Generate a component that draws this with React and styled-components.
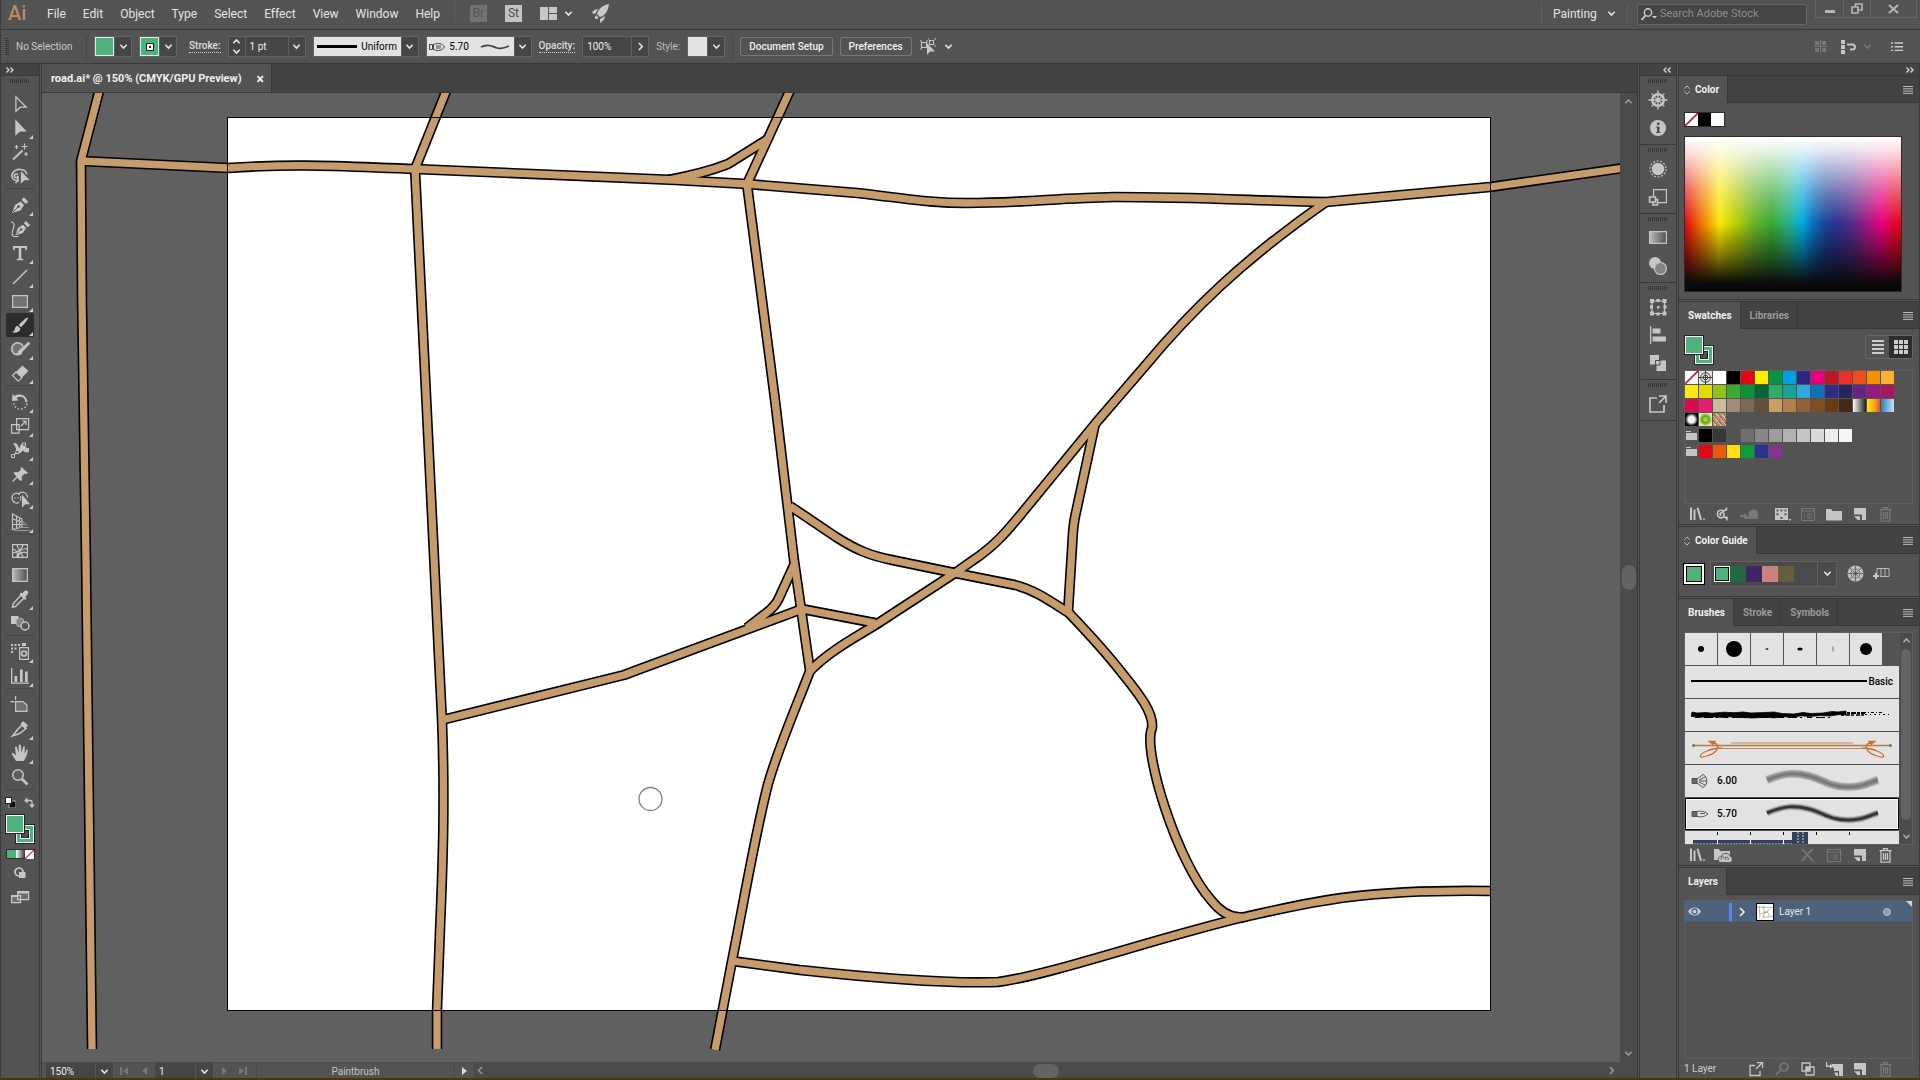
import React, { useState } from "react";
import styled, { createGlobalStyle } from "styled-components";

const GREEN = "#4fb17c";
const ICON = "#c6c6c6";
const DIM = "#777777";

const GlobalStyle = createGlobalStyle`
  * {
    box-sizing: border-box;
  }

  body {
    margin: 0;
    background: #535353;
    color: #dedede;
    font-family: Roboto, "Liberation Sans", sans-serif;
    font-size: 10px;
    line-height: 14px;
    overflow: hidden;
  }

  button, input, select {
    font: inherit;
    color: inherit;
    border: 0;
    padding: 0;
    margin: 0;
    background: none;
    border-radius: 0;
    outline: none;
  }

  svg {
    display: block;
    flex: none;
  }
`;

const Page = styled.div`
  height: 100vh;
  display: flex;
  flex-direction: column;
  border-left: 1px solid #3b3b3b;
  border-bottom: 2px solid #47350f;
`;

const MenuBar = styled.header`
  display: flex;
  align-items: center;
  height: 30px;
  padding: 0 3px 7px 7px;
  border-bottom: 1px solid #383838;
`;

const Logo = styled.span`
  width: 30px;
  padding-top: 4px;
  font-size: 20px;
  line-height: 20px;
  font-weight: 500;
  color: #bd8a66;
`;

const Menus = styled.nav`
  display: flex;
  padding-top: 6px;
`;

const MenuItem = styled.button`
  padding: 0 8px 0 9px;
  font-size: 12px;
  line-height: 16px;
  color: #e6e6e6;
`;

const MenuTools = styled.div`
  display: flex;
  align-items: center;
  gap: 18px;
  margin-left: 6px;
  padding: 5px 0 0 15px;
  border-left: 1px solid #5f5f5f;
`;

const AppBadge = styled.button`
  width: 17px;
  height: 17px;
  font-size: 12px;
  line-height: 17px;
  color: ${(p) => (p.$dim ? "#565656" : "#4b4b4b")};
  background: ${(p) => (p.$dim ? "#727272" : "#c4c4c4")};
`;

const IconButton = styled.button`
  display: flex;
  align-items: center;
  justify-content: center;
  gap: 7px;
`;

const Spacer = styled.div`
  flex: 1;
`;

const Workspace = styled.label`
  display: flex;
  align-items: center;
  height: 20px;
  margin-top: 5px;
  padding: 0 11px;
  border: solid #606060;
  border-width: 0 1px;
`;

const WorkspaceSelect = styled.select`
  appearance: none;
  width: 54px;
  font-size: 12px;
  line-height: 16px;
  color: #e6e6e6;
`;

const Search = styled.label`
  display: flex;
  align-items: center;
  gap: 2px;
  width: 170px;
  height: 21px;
  margin: 6px 8px 0 9px;
  padding-left: 3px;
  border: 1px solid #666;
  border-radius: 2px;
  background: #454545;
`;

const SearchInput = styled.input`
  width: 130px;
  font-size: 11px;

  &::placeholder {
    color: #8d8d8d;
    opacity: 1;
  }
`;

const WindowButtons = styled.div`
  display: flex;
  align-self: flex-start;
  height: 18px;
  border: 1px solid #656565;
  border-top: 0;
`;

const WindowButton = styled(IconButton)`
  width: ${(p) => p.$width || 27}px;

  & + & {
    border-left: 1px solid #656565;
  }
`;

const ControlBar = styled.section`
  display: flex;
  align-items: center;
  gap: 7px;
  height: 34px;
  padding: 0 16px 0 4px;
  border-bottom: 1px solid #383838;
`;

const Grip = styled.div`
  flex: none;
  width: ${(p) => (p.$vertical ? 4 : 20)}px;
  height: ${(p) => (p.$vertical ? 18 : 4)}px;
  background: repeating-linear-gradient(
    ${(p) => (p.$vertical ? "180deg" : "90deg")},
    #363636 0 1px,
    transparent 1px 2px
  );
`;

const Selection = styled.span`
  width: 63px;
  color: #c8c8c8;
`;

const Divider = styled.div`
  width: 1px;
  height: 24px;
  background: #464646;
`;

const Field = styled.div`
  display: flex;
  align-items: stretch;
  height: 21px;
  border: 1px solid #646464;
  background: #454545;
`;

const FieldInput = styled.input`
  width: ${(p) => p.$width}px;
  padding-left: 4px;
  color: #f0f0f0;
`;

const FieldButton = styled(IconButton)`
  width: ${(p) => p.$width || 17}px;
  border-left: 1px solid #5d5d5d;
`;

const Spinner = styled.div`
  display: flex;
  flex-direction: column;
  justify-content: space-evenly;
  width: 17px;
  border-right: 1px solid #5d5d5d;
`;

const Well = styled.button`
  display: flex;
  align-items: center;
  justify-content: center;
  gap: 4px;
  width: ${(p) => p.$width || 19}px;
  background: ${(p) => p.$color || "#e3e3e3"};
  border: ${(p) => (p.$color ? "1px solid #dceee4" : "0")};
  color: #000;
`;

const StrokeDot = styled.span`
  width: 6px;
  height: 6px;
  border: 2px solid #fff;
  outline: 1px solid #222;
  background: #222;
`;

const DottedLabel = styled.button`
  margin-left: ${(p) => p.$indent || 0}px;
  line-height: 12px;
  font-weight: 500;
  border-bottom: 1px dotted #d0d0d0;
`;

const PlainLabel = styled.span`
  color: #bdbdbd;
`;

const TextButton = styled.button`
  height: 19px;
  padding: 0 8px;
  font-weight: 500;
  color: #f2f2f2;
  border: 1px solid #777;
  border-radius: 2px;
`;

const Tail = styled.div`
  display: flex;
  align-items: center;
  gap: 14px;
  margin-left: auto;
`;

const Main = styled.main`
  flex: 1;
  min-height: 0;
  display: flex;
`;

const ToolColumn = styled.aside`
  display: flex;
  flex-direction: column;
  width: 41px;
  border-right: 3px double #3b3b3b;
`;

const Strip = styled.div`
  display: flex;
  justify-content: ${(p) => (p.$end ? "flex-end" : "flex-start")};
  align-items: center;
  height: 12px;
  padding: 0 5px;
  background: #424242;
  border-bottom: 1px solid #383838;
`;

const ToolGrip = styled.div`
  display: flex;
  justify-content: center;
  height: 16px;
  padding-top: 3px;
`;

const ToolGroup = styled.div`
  display: flex;
  flex-direction: column;
  margin: 0 4px 4px;
  border-bottom: 1px solid #484848;
`;

const Tool = styled.button`
  position: relative;
  display: flex;
  align-items: center;
  justify-content: center;
  align-self: center;
  width: 28px;
  height: 24px;
  border-radius: 2px;
  background: ${(p) => (p.$active ? "#2c2c2c" : "transparent")};

  &::after {
    content: "";
    display: ${(p) => (p.$more ? "block" : "none")};
    position: absolute;
    right: 1px;
    bottom: 1px;
    border: 2px solid transparent;
    border-right-color: #d0d0d0;
    border-bottom-color: #d0d0d0;
  }
`;

const ToolFooter = styled.div`
  display: flex;
  flex-direction: column;
  align-items: center;
  padding-top: 3px;
`;

const DefaultRow = styled.div`
  display: flex;
  justify-content: space-between;
  width: 30px;
  margin-bottom: 6px;
`;

const ModeRow = styled.div`
  display: flex;
  margin: 5px 0 2px;
  border: 1px solid #2e2e2e;
`;

const Mode = styled.button`
  width: 9px;
  height: 8px;
  background: ${(p) => p.$fill};
`;

const Document = styled.section`
  flex: 1;
  min-width: 0;
  display: flex;
  flex-direction: column;
`;

const TabBar = styled.div`
  display: flex;
  height: 29px;
  background: #424242;
  border-bottom: 1px solid #383838;
`;

const DocTab = styled.div`
  display: flex;
  align-items: center;
  gap: 15px;
  padding: 2px 7px 0 9px;
  background: #535353;
  border-right: 1px solid #383838;
  font-size: 11px;
  font-weight: 700;
  color: #f0f0f0;
`;

const CloseTab = styled.button`
  font-size: 14px;
  font-weight: 700;
`;

const Work = styled.div`
  flex: 1;
  min-height: 0;
  display: flex;
`;

const Canvas = styled.div`
  flex: 1;
  min-width: 0;
  overflow: hidden;
  background: #606060;
`;

const ScrollY = styled.div`
  display: flex;
  flex-direction: column;
  align-items: center;
  justify-content: space-between;
  width: 17px;
  padding: 4px 0;
  background: #4a4a4a;
`;

const Thumb = styled.div`
  width: ${(p) => p.$width}px;
  height: ${(p) => p.$height}px;
  border-radius: 8px;
  background: #636363;
`;

const StatusBar = styled.footer`
  display: flex;
  align-items: stretch;
  height: 16px;
  padding-left: 4px;
  border-top: 1px solid #4b4b4b;
`;

const StatusInput = styled.input`
  width: ${(p) => p.$width}px;
  padding: 2px 0 0 4px;
  color: #f0f0f0;
  background: #454545;
`;

const StatusButton = styled(IconButton)`
  width: ${(p) => p.$width || 18}px;
  padding-top: 1px;
  background: ${(p) => (p.$dark ? "#454545" : "transparent")};
  border-left: 1px solid #565656;
`;

const StatusText = styled.div`
  width: 199px;
  margin-left: 5px;
  padding-top: 2px;
  text-align: center;
  color: #c4c4c4;
  border: solid #484848;
  border-width: 0 1px;
`;

const ScrollX = styled.div`
  flex: 1;
  display: flex;
  align-items: center;
  justify-content: space-between;
  padding: 0 21px 0 2px;
  margin-left: 1px;
  background: #4a4a4a;
`;

const Dock = styled.aside`
  display: flex;
  flex-direction: column;
  width: 42px;
  border-left: 3px double #383838;
  border-right: 3px double #383838;
`;

const DockGroup = styled.div`
  display: flex;
  flex-direction: column;
  align-items: center;
  padding: 3px 0 2px;
  border-bottom: 1px solid #383838;
`;

const DockButton = styled(IconButton)`
  width: 28px;
  height: 28px;

  ${Grip} + & {
    margin-top: 3px;
  }
`;

const Panels = styled.aside`
  display: flex;
  flex-direction: column;
  width: 241px;
  border-right: 1px solid #3b3b3b;
`;

const Panel = styled.section`
  display: flex;
  flex-direction: column;
  flex: ${(p) => (p.$grow ? 1 : "none")};

  & + & {
    border-top: 3px double #383838;
  }
`;

const PanelHeader = styled.div`
  display: flex;
  align-items: stretch;
  height: 27px;
  background: #424242;
  box-shadow: inset 0 -1px #383838;
`;

const PanelTab = styled.button`
  display: flex;
  align-items: center;
  gap: 5px;
  padding: 0 8px 0 ${(p) => (p.$closed ? 5 : 9)}px;
  font-weight: 700;
  color: ${(p) => (p.$active ? "#f2f2f2" : "#999")};
  background: ${(p) => (p.$active ? "#535353" : "transparent")};
  border-right: 1px solid #383838;
`;

const PanelMenu = styled(IconButton)`
  margin: 0 6px 0 auto;
`;

const ColorBody = styled.div`
  padding: 9px 17px 7px 5px;
`;

const Quick = styled.div`
  display: flex;
  width: 41px;
  border: 1px solid #2b2b2b;
`;

const Chip = styled.button`
  width: ${(p) => p.$size || 13}px;
  height: ${(p) => p.$size || 13}px;
  overflow: hidden;
  margin: ${(p) => (p.$picked ? "0 1px" : 0)};
  background: ${(p) => p.$fill};
  border: ${(p) => (p.$picked ? "1px solid #000" : "0")};
  box-shadow: ${(p) => (p.$picked ? "0 0 0 1px #fff" : "none")};
`;

const Spectrum = styled.div`
  height: 156px;
  margin-top: 9px;
  border: 1px solid #2b2b2b;
  background: linear-gradient(
      180deg,
      #fff 0%,
      rgba(255, 255, 255, 0.85) 10%,
      rgba(255, 255, 255, 0.35) 35%,
      rgba(0, 0, 0, 0) 56%,
      rgba(0, 0, 0, 0.45) 76%,
      #0a0a0a 95%,
      #050505 100%
    ),
    linear-gradient(
      90deg,
      #e30613 0%,
      #f07a00 8%,
      #fbe90a 16%,
      #c6d300 22%,
      #6ab42a 32%,
      #36a932 40%,
      #2fb070 46%,
      #12b3b5 51%,
      #00a3e0 55%,
      #0b70c0 59%,
      #1c4399 65%,
      #2b3490 70%,
      #55298a 77%,
      #9a1a82 84%,
      #e5007d 91%,
      #e5062b 97%,
      #e30613 100%
    );
`;

const SwatchTop = styled.div`
  display: flex;
  justify-content: space-between;
  align-items: flex-start;
  padding: 6px 6px 5px 5px;
`;

const ViewToggle = styled.div`
  display: flex;
  height: 24px;
  border: 1px solid #666;
  border-radius: 2px;
`;

const ViewButton = styled(IconButton)`
  width: 23px;
  background: ${(p) => (p.$active ? "#2c2c2c" : "transparent")};
`;

const SwatchBox = styled.div`
  height: 134px;
  margin: 0 6px 0 5px;
  border: 1px solid #5f5f5f;
`;

const SwatchRow = styled.div`
  display: flex;
  gap: 1px;
  margin-bottom: ${(p) => (p.$gap ? 3 : 1)}px;
`;

const PanelTools = styled.div`
  display: flex;
  align-items: center;
  height: 20px;
  padding: 0 20px 0 5px;
`;

const PanelTool = styled(IconButton)`
  width: 26px;
  height: 18px;
  margin-left: ${(p) => (p.$push ? "auto" : "0")};
`;

const GuideBody = styled.div`
  display: flex;
  align-items: center;
  height: 42px;
  padding: 0 5px 3px;
`;

const BaseColor = styled.button`
  width: 20px;
  height: 20px;
  border: 2px solid #fff;
  outline: 1px solid #000;
  background: ${GREEN};
  box-shadow: inset 0 0 0 1px #000;
`;

const Harmony = styled.div`
  display: flex;
  align-items: center;
  width: 127px;
  height: 26px;
  margin-left: 6px;
  padding-left: 3px;
  border: 1px solid #616161;
  background: #4a4a4a;
`;

const HarmonyOpen = styled(IconButton)`
  align-self: stretch;
  width: 19px;
  margin-left: auto;
  border-left: 1px solid #616161;
`;

const GuideTools = styled.div`
  display: flex;
  gap: 9px;
  margin-left: 10px;
`;

const BrushBox = styled.div`
  display: flex;
  height: 213px;
  margin: 6px 6px 0 5px;
  border: 1px solid #5f5f5f;
  overflow: hidden;
`;

const BrushList = styled.div`
  display: flex;
  flex-direction: column;
  gap: 1px;
  width: 214px;
`;

const DotRow = styled.div`
  display: flex;
  gap: 1px;
`;

const DotBrush = styled(IconButton)`
  width: 32px;
  height: 32px;
  background: #e3e3e3;
`;

const BrushRow = styled.button`
  display: flex;
  align-items: center;
  flex: none;
  height: 32px;
  padding: 0 5px;
  color: #000;
  font-weight: 500;
  background: #e3e3e3;
  border: ${(p) => (p.$picked ? "1px solid #000" : "1px solid #e3e3e3")};
  box-shadow: inset 0 0 0 1px ${(p) => (p.$picked ? "#fff" : "#e3e3e3")};
`;

const BrushSize = styled.span`
  width: 55px;
  padding-left: 8px;
  text-align: left;
`;

const BrushScroll = styled.div`
  display: flex;
  flex-direction: column;
  align-items: center;
  gap: 4px;
  width: 12px;
  margin-left: auto;
  padding: 3px 0;
  background: #4b4b4b;
`;

const LayerBox = styled.div`
  flex: 1;
  margin: 5px 6px 0 5px;
  border: 1px solid #5f5f5f;
`;

const LayerRow = styled.div`
  position: relative;
  display: flex;
  align-items: center;
  height: 21px;
  padding-left: 3px;
  background: #4d637c;

  &::after {
    content: "";
    position: absolute;
    top: 0;
    right: 0;
    border: 3px solid transparent;
    border-top-color: #d4d4d4;
    border-right-color: #d4d4d4;
  }
`;

const LayerColor = styled.div`
  width: 3px;
  height: 18px;
  margin-left: 28px;
  background: #5b84ec;
`;

const LayerThumb = styled.div`
  margin: 0 5px 0 10px;
  border: 1px solid #000;
  background: #fff;
`;

const LayerName = styled.span`
  color: #e8e8e8;
`;

const LayerTools = styled(PanelTools)`
  height: 19px;
`;

const LayerCount = styled.span`
  margin-right: auto;
  color: #d0d0d0;
`;

const s = { fill: "none", stroke: ICON, strokeWidth: 1.2 };

function Chevron({ dir = "down", color = "#e8e8e8", size = 9 }) {
  const d = {
    down: "M1.5 3 5 6.8 8.5 3",
    up: "M1.5 7 5 3.2 8.5 7",
    right: "M3.2 1.2 7 5 3.2 8.8",
    left: "M6.8 1.2 3 5l3.8 3.8",
  }[dir];
  return (
    <svg width={size} height={size} viewBox="0 0 10 10">
      <path d={d} fill="none" stroke={color} strokeWidth="1.7" />
    </svg>
  );
}

function Doubles({ left }) {
  return (
    <svg width="8" height="6" viewBox="0 0 8 6">
      <path
        d={left ? "M3.5 .5 1 3l2.5 2.5M7.5 .5 5 3l2.5 2.5" : "M.5 .5 3 3 .5 5.5M4.5 .5 7 3 4.5 5.5"}
        fill="none"
        stroke="#d6d6d6"
        strokeWidth="1.4"
      />
    </svg>
  );
}

function Hamburger() {
  return (
    <svg width="10" height="8" viewBox="0 0 10 8">
      <path d="M0 .5h10M0 2.8h10M0 5.1h10M0 7.4h10" stroke="#bbb" strokeWidth="1" />
    </svg>
  );
}

function NoneMark({ size = 13 }) {
  return (
    <svg width={size} height={size} viewBox="0 0 13 13">
      <path fill="#fff" d="M0 0h13v13H0z" />
      <path d="M0 13 13 0" stroke="#d5141b" strokeWidth="1.6" />
    </svg>
  );
}

function FillStroke() {
  return (
    <svg width="30" height="30" viewBox="0 0 30 30">
      <path d="M10 10h20v20H10z" fill="#222" />
      <path d="M11 11h18v18H11z" fill="#fff" />
      <path d="M12 12h16v16H12z" fill={GREEN} />
      <path d="M15 15h10v10H15z" fill="#fff" />
      <path d="M16 16h8v8h-8z" fill="#222" />
      <path d="M17 17h6v6h-6z" fill="#535353" />
      <path d="M0 0h20v20H0z" fill="#222" />
      <path d="M1 1h18v18H1z" fill="#fff" />
      <path d="M2 2h16v16H2z" fill={GREEN} />
    </svg>
  );
}

const nib = (
  <>
    <path d="m2 18 3-8 5.500-3.500L14 10l-3.500 5.500z" fill={ICON} />
    <path d="m3 17 5-5" stroke="#535353" strokeWidth="1" />
    <circle cx="8.500" cy="11.500" r="1.300" fill="#535353" />
    <path d="m11.500 4.800 2.300-2.600 4.600 4.600-2.600 2.300z" fill={ICON} />
  </>
);

const toolIcons = {
  Selection: <path {...s} d="M5.900 2.800v14.400l4.400-4h5.900z" strokeWidth="1.300" />,
  "Direct Selection": <path fill={ICON} d="M5.300 1.500v16.300l4.700-4.300h6.800z" />,
  "Magic Wand": (
    <>
      <path d="m3 17.500 9.500-9" stroke={ICON} strokeWidth="2" />
      <path d="M14.500 1.500v6M11.500 4.500h6M6.500 3v4M4.500 5h4M16 10v4M14 12h4" stroke={ICON} strokeWidth="1.200" />
    </>
  ),
  Lasso: (
    <>
      <path {...s} strokeWidth="1.700" d="M9 14.500C4 15.500 1.500 12 2 9c.7-4 5-6 9-5.500 3 .3 5.500 2 5.700 5M8 8.500c-2.300-1.300-4 .2-3.500 2 .6 1.700 3.500 1.300 3.500-.8 0 3-.5 6-2.500 7.300" />
      <path fill={ICON} stroke="#535353" strokeWidth=".7" d="M10.500 4v14.500l4-4h5.700z" />
    </>
  ),
  Pen: nib,
  Curvature: (
    <>
      <g transform="translate(3.500 0) scale(.9)">{nib}</g>
      <path {...s} d="M1 3c3 0 3.500 3 2.500 6-1 3-3 8 1 8.500h4" />
    </>
  ),
  Type: <path fill={ICON} d="M3 3h14v4h-1.500L15 5h-3.700v10.500l2 .5v1.300H6.700V16l2-.5V5H5l-.5 2H3z" />,
  "Line Segment": <path d="M3 17 17 3" stroke={ICON} strokeWidth="1.400" />,
  Rectangle: <path {...s} fill="#727272" d="M2.600 4.600h14.800v11.800H2.600z" />,
  Paintbrush: (
    <path fill={ICON} d="M18 2.500c-1-1-8.500 6.300-9.300 7.500l2.300 2.300C12.500 11 19 3.500 18 2.500zM8 11c-2.700-.5-3 2-3.300 3.500-.2 1.300-1 2-2.700 2.500 3 1.500 8 .5 8.300-3.500z" />
  ),
  Shaper: (
    <>
      <path {...s} strokeWidth="1.600" fill="#727272" d="M13 7a6 6 0 1 0-1 7" />
      <path fill={ICON} stroke={ICON} strokeWidth=".6" d="M18.500 3 20 4.500 11 14l-2.500.7-.7-.7.7-2z" />
      <path {...s} d="M8.500 14.500 6 15" />
    </>
  ),
  Eraser: (
    <>
      <path fill={ICON} d="m12.500 2.500 6 5.500-6.500 6.500-6-5.500z" />
      <path {...s} d="m6 9-3.500 3.500 5.500 5.500h.5l3.500-3.500z" />
    </>
  ),
  Rotate: (
    <>
      <path fill={ICON} d="M2 9 2.500 2l2 2C9 .8 17 3 17.500 10l-2 .2C15 5 10 3.500 6.500 6L8.500 8.500z" />
      <path {...s} strokeWidth="1.500" strokeDasharray="1.500 2" d="M17 11.500c-1.500 7.500-11.500 7.500-13.500 0" />
    </>
  ),
  Scale: <path {...s} d="M6.600 2.600h12v11h-12zM1.600 8.600h7.500v8.500H1.600zM11 10l4.500-4.500M12 5h4v4" />,
  Width: (
    <>
      <path fill={ICON} d="M3 4c3-3 5 1 6.500 5 .5-4 2.500-7 4.500-4 1.500 2.500 3 3.500 5 3v4c-3 1-5.500 0-6-2-1.500 3-4 4-6 2C6 10 6 6 3 4z" />
      <path {...s} d="m3 16 4-4 7-6" />
      <path d="M1.500 14.500h3v3h-3zM6 10.500h3v3H6zM12.500 3h3v3h-3z" fill="#535353" stroke={ICON} />
    </>
  ),
  "Puppet Warp": (
    <path fill={ICON} d="m11.500 3 6.500 6-2 1-1.700-.3-2.800 3.300.5 3-1.200 1.200-3.500-3.500L3 18l-1-1 4.500-4.300L3.500 9 5 8l3 .3 3-2.800-.5-1.500z" />
  ),
  "Shape Builder": (
    <>
      <path {...s} d="M8.500 14.500C7 16 2 14.500 2 10s5-6 6.500-4c3-4 9-1 9 3.500" />
      <path {...s} strokeDasharray="1.500 1.500" d="M4 10h9M8.500 6c3 1.500 3 6 0 8.500" />
      <path fill={ICON} d="M12 6.500v13l3.300-3.300H20z" />
    </>
  ),
  "Perspective Grid": (
    <>
      <path {...s} d="M2.500 2v15.500L12 15V7zM2.500 7 12 10M2.500 12.500H12M6.500 4v12.500M9.500 5.500v10" />
      <path fill="#808080" d="M12.500 8 18 13.500h-5.500z" />
      <path d="M8 15.500h11M4 18.500h16" stroke="#999" />
    </>
  ),
  Mesh: <path {...s} d="M2.600 3.600h14.800v12.800H2.600zM3 8c4 1 5 4 4 8M3 12c5-1 9-4 10-8M7 4c1 5 5 8 6 12M17 8c-4-1-8 2-10 8M17 12c-4-2-8 0-9 4" />,
  Gradient: (
    <>
      <defs>
        <linearGradient id="toolGradient">
          <stop offset="0" stopColor="#bbb" />
          <stop offset="1" stopColor="#505050" />
        </linearGradient>
      </defs>
      <path stroke={ICON} strokeWidth="1.200" fill="url(#toolGradient)" d="M2.600 3.600h14.800v12.800H2.600z" />
    </>
  ),
  Eyedropper: (
    <>
      <path {...s} strokeWidth="1.500" d="m11 6 3 3-8.500 8.500L2.500 18l.5-3z" />
      <path fill={ICON} d="m9.500 5 1.500-1.500 1.500 1C13.500 2.500 15 1 17 1.800c2 1 1.300 3.200-.5 4.700L15.500 8l1 1.500L15 11z" />
    </>
  ),
  Blend: (
    <>
      <path fill={ICON} d="M1 3h7.500v8H1z" />
      <path d="M6 7.500 9 5l4 1 1 4-2.500 4-4.500-1z" fill="#858585" stroke="#aaa" />
      <circle {...s} cx="15" cy="13" r="4" strokeWidth="1.500" fill="#535353" />
    </>
  ),
  "Symbol Sprayer": (
    <>
      <path fill={ICON} d="M1 2h2v2H1zM4.500 2h2v2h-2zM8 2h2v2H8zM1 5.500h2v2H1zM4.500 5.500h2v2h-2zM1 9h2v2H1zM12 1h4v3h-4z" />
      <path {...s} d="M9.600 5.600h8.800v11.800H9.600z" />
      <circle {...s} cx="14" cy="11.500" r="2.500" strokeWidth="1.700" />
    </>
  ),
  "Column Graph": <path fill={ICON} d="M1 2h1.300v14.500H19v1.200H1zM4.500 10h2.700v6H4.500zM10 3.500h2.700V16H10zM15 5.500h2.700V16H15z" />,
  Artboard: (
    <>
      <path {...s} fill="#707070" d="M5.600 6.600h7.500l3.800 3.500v6.300H5.600z" />
      <path {...s} d="M.5 6.600h4M5.600 1v4" />
    </>
  ),
  Slice: (
    <>
      <path {...s} strokeWidth="1.500" d="m12 6 4 3.500-6.500 5L2.500 17 8 10z" />
      <path fill={ICON} d="m13 2 5 4.500-3 3.500L10.500 5z" />
    </>
  ),
  Hand: (
    <path fill={ICON} d="M6 18 2 11.500c-.7-1.300.7-2 1.800-1L6 12.500 5 5c-.2-1.500 1.500-2 2-.5L8.500 10l.2-7.500c0-1.500 2-1.500 2.200 0L11.500 10l1.500-6c.5-1.300 2-1 1.800.5L14.500 11l1.700-3.700c.7-1.300 2-.6 1.600.7C17 11 16 15.500 13.500 18z" />
  ),
  Zoom: (
    <>
      <circle {...s} cx="8" cy="8" r="5.300" strokeWidth="1.500" fill="#5e5e5e" />
      <path d="m12 12 5.500 5.500" stroke={ICON} strokeWidth="2.600" />
    </>
  ),
};

const toolGroups = [
  ["Selection", "Direct Selection+", "Magic Wand", "Lasso"],
  ["Pen+", "Curvature", "Type+", "Line Segment+", "Rectangle+", "Paintbrush+", "Shaper+", "Eraser+"],
  ["Rotate+", "Scale+", "Width+", "Puppet Warp+", "Shape Builder+", "Perspective Grid+"],
  ["Mesh", "Gradient", "Eyedropper+", "Blend"],
  ["Symbol Sprayer+", "Column Graph+"],
  ["Artboard", "Slice+", "Hand+", "Zoom"],
];

const dockIcons = {
  Navigator: (
    <>
      <circle {...s} cx="10" cy="10" r="5.800" strokeWidth="2.400" />
      <circle cx="10" cy="10" r="2" fill={ICON} />
      <path d="M10 .5v19M.5 10h19M3.600 3.600l12.800 12.800M16.400 3.600 3.600 16.400" stroke={ICON} strokeWidth="1.300" />
    </>
  ),
  Info: (
    <>
      <circle cx="10" cy="10" r="8" fill={ICON} />
      <path d="M9 4.500h2.500V7H9zM8 8.500h3.500v5.500h1V15H8v-1h1V9.500H8z" fill="#505050" />
    </>
  ),
  Appearance: (
    <>
      <circle cx="10" cy="10" r="6.200" fill={ICON} />
      <circle {...s} cx="10" cy="10" r="8" strokeDasharray="2 1.600" />
    </>
  ),
  "Graphic Styles": (
    <>
      <path {...s} d="M5.600 9.500V2.600h12.800v13H10" />
      <path {...s} strokeWidth="1.600" d="M1.600 10h5.800v5H1.600zM5 15v3h4.500v-5.500H7.500" />
    </>
  ),
  Gradient: <path stroke={ICON} strokeWidth="1.200" fill="url(#toolGradient)" d="M1.600 3.600h16.800v11.800H1.600z" />,
  Transparency: (
    <>
      <circle cx="7" cy="7" r="6" fill={ICON} />
      <circle cx="12.500" cy="12.500" r="6" fill="#858585" stroke={ICON} strokeWidth="1.200" />
    </>
  ),
  Transform: (
    <>
      <path {...s} d="M4 4h12.500v12.500H4z" />
      <path fill={ICON} d="M2 2h4v4H2zM8.300 2h3.400v3H8.300zM14.500 2h4v4h-4zM2 8.300h3v3.400H2zM15.500 8.300h3v3.400h-3zM2 14.500h4v4H2zM8.300 15.500h3.400v3H8.300zM14.500 14.500h4v4h-4zM9 9h2.500v2.500H9z" />
    </>
  ),
  Align: <path fill={ICON} d="M2 1h1.300v18H2zM4.500 3.500h8v5h-8zM4.500 11.500H18v5H4.500z" />,
  Pathfinder: (
    <>
      <path fill={ICON} d="M2 2h9v5.500h7V18H8.500v-6.500H2z" />
      <path d="M7.500 7.500h4.500V12H7.500z" fill={ICON} stroke="#4a4a4a" />
    </>
  ),
  "Asset Export": <path {...s} strokeWidth="1.700" d="M9 4H2v14h14v-7M11 2h7v7M17.500 2.500 11 9" />,
};

const dockGroups = [
  ["Navigator", "Info"],
  ["Appearance", "Graphic Styles"],
  ["Gradient", "Transparency"],
  ["Transform", "Align", "Pathfinder"],
  ["Asset Export"],
];

const panelIcons = {
  library: (
    <>
      <path d="M2 2.500h2V15H2zM5.500 4.500h2V15h-2zM8.500 3l2-.6L14 14.500l-2 .6z" />
      <path d="m14.500 13.500 3 0-1.500 2z" />
    </>
  ),
  share: <path fill="none" strokeWidth="1.600" stroke="currentColor" d="M9 5.500C5 4.500 3.500 6.500 3.500 9c0 3 2.500 4.500 5 3.500 2.500-1.300 2-5-.5-5-2 0-2.500 2.500-.7 3M8 7l5-3M10 12l3 1.500M12.500 2.500v3M13 11.500v4" />,
  cloud: <path d="M6 14c-1 0-1-1.500 0-2l3-1C7 8 10 3.500 13 5c3-1 5 1 4.500 3.500C20.500 9 20 14 17 14zM0 10h4V8l3.500 3-3.500 3v-2H0z" />,
  kinds: (
    <>
      <path d="M2 3h13v12H2z" />
      <path d="M3.500 4.500h2v2h-2zM7.500 4.500h2v2h-2zM11.500 4.500h2v2h-2zM3.500 8.200h2v2h-2zM11.500 8.200h2v2h-2zM7.500 12h2v2h-2z" fill="#555" />
      <path d="m15.500 14 3 0-1.500 2z" />
    </>
  ),
  options: <path fill="none" stroke="currentColor" d="M2.500 3.500h13v12h-13zM2.500 6h13M5 9h1M8 9h5M5 11h1M8 11h5M5 13h1M8 13h5" />,
  folder: <path d="M1 4h5l1.500 2H17v9.500H1z" />,
  page: <path d="M3 3h12v12h-4V9.500H3zM3 11.200h6V15H6.500z" />,
  trash: <path fill="none" stroke="currentColor" strokeWidth="1.300" d="M2.500 4.600h12M6.500 4.500V2.600h4v2M4 4.600v11.500h9V4.600M6.500 7v7M8.500 7v7M10.500 7v7" />,
  remove: <path fill="none" stroke="currentColor" strokeWidth="1.800" d="M3 3l11 12M14 3c-4 3-7 7-11 12" />,
  ccFolder: (
    <>
      <path d="M0 3h5l1 2h10v9H0z" />
      <path d="M7 16.500c-4 0-3.500-6 .5-6 1-4.500 8-3.500 8.500-.5 3 1 3 6.500-.5 6.500z" stroke="#555" />
      <path d="M8 14c-2-1.500 0-4 2-2.500l2.500 2.500M11 12c1.500-2 4.500 0 3 2" fill="none" stroke="#555" />
    </>
  ),
  exportBox: <path fill="none" stroke="currentColor" strokeWidth="1.300" d="M8 5.500H3v10h10V11M10 2.600h5.500V8M15 3 9 9" />,
  find: <path fill="none" stroke="currentColor" strokeWidth="1.700" d="m3 15 4.500-5M11 3a4 4 0 1 1-.1 0z" />,
  mask: (
    <>
      <path fill="none" stroke="currentColor" strokeWidth="1.300" d="M3 3h8v8H3zM7 7h8v8H7z" />
      <path d="M7 7h4v4H7z" />
    </>
  ),
  sublayer: <path d="M7 4h11v12h-4v-5H9V8L7 7zM9 12.500h4V16h-2zM1 2h1.300v3.500H5V3.500L8 6.200 5 9V7H1z" />,
};

function PanelIcon({ name, dim }) {
  return (
    <svg width="18" height="18" viewBox="0 0 18 18" color={dim ? DIM : ICON} fill="currentColor">
      {panelIcons[name]}
    </svg>
  );
}

const swatchRows = [
  ["none", "reg", "#fff", "#000", "#e30613", "#ffed00", "#009640", "#009fe3", "#312783", "#e6007e", "#be1622", "#e6332a", "#e94e1b", "#f39200", "#f9b233"],
  ["#f9e81c", "#dedc00", "#95c11f", "#3aaa35", "#0d9137", "#006633", "#2fac66", "#16a199", "#2eaae0", "#0f72b9", "#2d2e83", "#29235c", "#662483", "#951b81", "#a3195b"],
  [
    "#d60b51", "#e71d73", "#cbbba0", "#a48a7b", "#7b6a58", "#634e42", "#ca9e67", "#b17f4a", "#936037", "#7d4e24", "#683c11", "#432918",
    "linear-gradient(90deg, #fff, #1d1d1b)",
    "linear-gradient(90deg, #f9e814, #f6a21d 60%, #e8501f)",
    "linear-gradient(90deg, #2c7fc2, #cfe0ee)",
  ],
  [
    "radial-gradient(circle, #f4f4f4 35%, #000 70%)",
    "radial-gradient(circle, #b6d23a 15%, #5fa321 35%, #8fbf2a 50%, #e8f0c0 75%)",
    "repeating-linear-gradient(50deg, #b98a6c 0 2px, #dcc0a4 2px 3px, #9b6c4e 3px 4px)",
  ],
];

const groupRows = [
  ["#000", "#363636", "#535353", "#6f6f6f", "#878787", "#9d9d9d", "#b2b2b2", "#c6c6c6", "#dadada", "#ededed", "#f6f6f6"],
  ["#e30613", "#ea5b0c", "#ffde14", "#0d9b3c", "#27348b", "#82358c"],
];

function Swatch({ fill }) {
  if (fill === "none")
    return (
      <Chip aria-label="None">
        <NoneMark />
      </Chip>
    );
  if (fill === "reg")
    return (
      <Chip $fill="#e3e3e3" aria-label="Registration">
        <svg width="13" height="13" viewBox="0 0 13 13" fill="none" stroke="#444">
          <circle cx="6.500" cy="6.500" r="4.800" />
          <circle cx="6.500" cy="6.500" r="2.300" />
          <path d="M6.500 0v13M0 6.500h13" />
        </svg>
      </Chip>
    );
  return <Chip $fill={fill} aria-label="Swatch" />;
}

function FolderMark() {
  return (
    <svg width="13" height="13" viewBox="0 0 13 13">
      <path d="M1 2.500h5" stroke={ICON} />
      <path d="M1 4h11v7H1z" fill={ICON} />
    </svg>
  );
}

const roads = [
  "M101 84 81 161 82 300 86 560 92 1049",
  "M81 161 228 168C300 163 350 167 415 169L675 180 747 184 857 193C910 199 930 203 967 203 1020 203 1060 198 1114 197 1200 197 1260 201 1326 202L1490 187 1624 168",
  "M449 84 415 169 442 720C445 800 443 860 440 930L437 1010V1049",
  "M793 84 747 184 775 400 794 560 810 671C795 710 779 746 768 784 755 835 747 885 732 961L715 1050",
  "M668 180C690 176 710 171 728 164L768 139",
  "M442 720 624 675 640 669 802 609 875 623",
  "M747 628 765 614Q775 607 779 598L795 563",
  "M790 506 836 537C858 551 872 556 892 560L955 573 1015 585C1035 590 1050 601 1069 613 1090 635 1108 655 1122 673 1139 694 1154 713 1152 728 1142 750 1177 862 1211 900Q1226 919 1243 917",
  "M810 671C830 650 860 635 880 622L955 573 972 561C995 546 1008 530 1022 513L1095 424 1145 366C1190 312 1240 262 1326 202",
  "M1095 424 1075 517Q1074 522 1073 532L1068 613",
  "M732 961 800 970C865 977 945 984 998 982 1050 975 1150 940 1240 918 1300 905 1350 889 1490 891",
];

function Roads() {
  return (
    <g fill="none" strokeLinejoin="round">
      {roads.map((d) => (
        <path key={d} d={d} stroke="#000" strokeWidth="10.500" />
      ))}
      {roads.map((d) => (
        <path key={d} d={d} stroke="#c69c6d" strokeWidth="7.300" />
      ))}
    </g>
  );
}

function Artwork() {
  return (
    <svg width="100%" height="100%">
      <g transform="translate(-42 -93)">
        <rect x="228" y="118" width="1262" height="892" fill="#fff" />
        <Roads />
        <rect x="227.500" y="117.500" width="1263" height="893" fill="none" stroke="#000" />
        <circle cx="650.500" cy="799" r="11.500" fill="none" stroke="#7d7d7d" strokeWidth="1.300" />
      </g>
    </svg>
  );
}

function Tools() {
  const [active, setActive] = useState("Paintbrush");

  return (
    <ToolColumn>
      <Strip>
        <Doubles />
      </Strip>
      <ToolGrip>
        <Grip />
      </ToolGrip>
      {toolGroups.map((group) => (
        <ToolGroup key={group[0]}>
          {group.map((item) => {
            const name = item.replace("+", "");
            return (
              <Tool
                key={name}
                aria-label={name}
                $active={active === name}
                $more={item !== name}
                onClick={() => setActive(name)}
              >
                <svg width="20" height="20" viewBox="0 0 20 20">
                  {toolIcons[name]}
                </svg>
              </Tool>
            );
          })}
        </ToolGroup>
      ))}
      <ToolFooter>
        <DefaultRow>
          <IconButton aria-label="Default fill and stroke">
            <svg width="11" height="11" viewBox="0 0 11 11">
              <path d="M4 4h7v7H4z" fill="#111" stroke="#aaa" />
              <path d="M.5 .5h6v6h-6z" fill="#fff" stroke="#222" />
            </svg>
          </IconButton>
          <IconButton aria-label="Swap fill and stroke">
            <svg width="11" height="11" viewBox="0 0 11 11">
              <path d="M3 3.500h3.500q1.500 0 1.500 1.500v3" fill="none" stroke={ICON} strokeWidth="1.300" />
              <path d="M0 3.500 3.500 .5v6zM8 11 5 7.500h6z" fill={ICON} />
            </svg>
          </IconButton>
        </DefaultRow>
        <FillStroke />
        <ModeRow>
          <Mode $fill={GREEN} aria-label="Color" />
          <Mode $fill="linear-gradient(90deg, #fff, #333)" aria-label="Gradient" />
          <Mode aria-label="None">
            <NoneMark size={9} />
          </Mode>
        </ModeRow>
        <Tool aria-label="Drawing mode">
          <svg width="20" height="20" viewBox="0 0 20 20">
            <circle {...s} cx="9" cy="9" r="4" strokeWidth="1.700" />
            <path fill={ICON} d="M9 9h6.500v6H9z" />
          </svg>
        </Tool>
        <Tool aria-label="Screen mode">
          <svg width="20" height="20" viewBox="0 0 20 20">
            <path {...s} fill="#6d6d6d" d="M1.600 8.600h9v7h-9zM7.600 4.600h11v8h-11z" />
            <path d="M7 4.500h12v2H7zM1 8.500h6v1.500H1z" fill={ICON} />
          </svg>
        </Tool>
      </ToolFooter>
    </ToolColumn>
  );
}

const wave = "M3 12C20 5 30 4 45 8S66 19 84 19 105 14 114 12";

function WaveBrush({ label, dark, picked, fan }) {
  return (
    <BrushRow $picked={picked}>
      <svg width="18" height="18" viewBox="0 0 18 18" fill="none" stroke="#555">
        <path d="M1 6.500h5v5H1z" fill="#666" />
        {fan ? (
          <path d="M6 7l6-4.500c5 2 5 11 0 13L6 11M8 9h7M8 8l6-3M8 10l6 3" />
        ) : (
          <path d="M6 6.500c5-1 8 0 11 2.500-3 2.500-6 3.500-11 2.500M9 8.500h5" />
        )}
      </svg>
      <BrushSize>{label}</BrushSize>
      <svg width="118" height="26" viewBox="0 0 118 26" fill="none" stroke={dark ? "#222" : "#555"}>
        <path d={wave} strokeWidth={dark ? 7 : 9} opacity=".15" />
        <path d={wave} strokeWidth={dark ? 5 : 7} opacity=".35" />
        <path d={wave} strokeWidth={dark ? 3 : 5} opacity={dark ? 0.7 : 0.3} />
        <path d={wave} strokeWidth="2" opacity=".4" />
      </svg>
    </BrushRow>
  );
}

function Tabs({ items, closed }) {
  return (
    <PanelHeader>
      {items.map((item, i) => (
        <PanelTab key={item} $active={i === 0} $closed={closed}>
          {closed ? (
            <svg width="6" height="10" viewBox="0 0 6 10" fill="none" stroke="#bbb">
              <path d="M.5 4V3.500L3 1l2.500 2.500V4M.5 6v.5L3 9l2.500-2.500V6" />
            </svg>
          ) : null}
          {item}
        </PanelTab>
      ))}
      <PanelMenu aria-label={items[0] + " menu"}>
        <Hamburger />
      </PanelMenu>
    </PanelHeader>
  );
}

function Brushes() {
  return (
    <>
      <BrushBox>
        <BrushList>
          <DotRow>
            {[[3, 3], [8, 8], [1.5, 0.8], [2.7, 1.6], [0.3, 3], [6, 6]].map(([rx, ry]) => (
              <DotBrush key={rx} aria-label="Calligraphic brush">
                <svg width="20" height="20" viewBox="0 0 20 20">
                  <ellipse cx="10" cy="10" rx={rx} ry={ry} />
                </svg>
              </DotBrush>
            ))}
          </DotRow>
          <BrushRow>
            <svg width="176" height="4">
              <path d="M0 1h176" stroke="#000" strokeWidth="2" />
            </svg>
            <Spacer />
            Basic
          </BrushRow>
          <BrushRow>
            <svg width="202" height="12" viewBox="0 0 202 12" stroke="#000" fill="none">
              <path d="m1 3 5 1 9-.5 6 .7 12-1 10 .5 9-.7 8 1 14-.5 9-.5 8 1.500 12 .5 9-1.500 8 1 12-.5 9-1.500 6 .5 8-1v4l-7-.5-9 1.500-10-.5-10 1-9-.7-8 1.500-8-.5-10 1-12-.5-9 .7-14-.5-9-.7-10 .5-13-.5-8 .5-9-1z" fill="#000" strokeWidth=".8" />
              <path d="M4 8.500h138" strokeWidth="1" strokeDasharray="5 4 9 3 2 5" />
              <path d="M150 4h24" strokeWidth="2" strokeDasharray="5 1 3 1" />
              <path d="M150 6h24" strokeWidth="1.500" strokeDasharray="3 2 4 1" />
              <path d="M172 3.500h20" strokeWidth="1" strokeDasharray="3 2 1 2" />
              <path d="M174 5.500h26" strokeWidth="1" strokeDasharray="2 3 1 3" />
            </svg>
          </BrushRow>
          <BrushRow>
            <svg width="202" height="22" viewBox="0 0 202 22" stroke="#d06a35" fill="none">
              <path d="M2 8.500h198" stroke="#a8843e" strokeWidth="1.500" />
              <path d="M40 6h122M30 11.500h142" strokeWidth=".8" />
              <path d="M20 5c10 1 9 10-4 14-9 3-9-1 0-5 4-2 8-3 15-3M182 5c-10 1-9 10 4 14 9 3 9-1 0-5-4-2-8-3-15-3" strokeWidth="1.300" />
              <path d="m17 4 8 0-3 4zM185 4l-8 0 3 4z" fill="#d06a35" strokeWidth=".5" />
              <circle cx="2.500" cy="8.500" r="1.500" fill="#8b7434" stroke="none" />
              <circle cx="199.500" cy="8.500" r="1.500" fill="#8b7434" stroke="none" />
            </svg>
          </BrushRow>
          <WaveBrush label="6.00" fan />
          <WaveBrush label="5.70" dark picked />
          <BrushRow>
            <svg width="202" height="30" viewBox="0 0 202 30">
              <path d="M26.500 0v3M59.500 0v3M92.500 0v3M125.500 0v3M158.500 0v3" stroke="#000" />
              <path d="M2 8h99V0h16v20H2z" fill="#35415a" />
              <path d="M3 12h98M107 0v20M112 0v20" stroke="#cdd3df" strokeDasharray="2 1" />
              <path d="M26.500 8v8M59.500 8v8M92.500 8v8" stroke="#fff" />
            </svg>
          </BrushRow>
        </BrushList>
        <BrushScroll>
          <Chevron dir="up" color="#aaa" />
          <Thumb $width={10} $height={171} />
          <Spacer />
          <Chevron color="#aaa" />
        </BrushScroll>
      </BrushBox>
      <PanelTools>
        <PanelTool aria-label="Brush libraries"><PanelIcon name="library" /></PanelTool>
        <PanelTool aria-label="Libraries panel"><PanelIcon name="ccFolder" /></PanelTool>
        <PanelTool $push aria-label="Remove stroke"><PanelIcon name="remove" dim /></PanelTool>
        <PanelTool aria-label="Options"><PanelIcon name="options" dim /></PanelTool>
        <PanelTool aria-label="New brush"><PanelIcon name="page" /></PanelTool>
        <PanelTool aria-label="Delete brush"><PanelIcon name="trash" /></PanelTool>
      </PanelTools>
    </>
  );
}

const menus = ["File", "Edit", "Object", "Type", "Select", "Effect", "View", "Window", "Help"];

export default function App() {
  const [stroke, setStroke] = useState("1 pt");
  const [opacity, setOpacity] = useState("100%");
  const [zoom, setZoom] = useState("150%");
  const [board, setBoard] = useState("1");

  return (
    <Page>
      <GlobalStyle />
      <MenuBar>
        <Logo>Ai</Logo>
        <Menus>
          {menus.map((name) => (
            <MenuItem key={name}>{name}</MenuItem>
          ))}
        </Menus>
        <MenuTools>
          <AppBadge $dim>Br</AppBadge>
          <AppBadge>St</AppBadge>
          <IconButton aria-label="Arrange documents">
            <svg width="17" height="13" viewBox="0 0 17 13">
              <path d="M0 0h8v13H0zM9 0h8v6H9zM9 7h8v6H9z" fill="#c8c8c8" />
            </svg>
            <Chevron />
          </IconButton>
          <IconButton aria-label="GPU performance">
            <svg width="19" height="19" viewBox="0 0 19 19" fill="#c8c8c8">
              <path d="M18 0c-6 1-11 5-12 10l3 3c5-1 8-6 9-13zM1 9c1-3 4-4 6-4L4 10zM9 19c3-2 5-4 5-7l-5 3zM5 11l2.500 2.500L6 15H4v-2z" />
            </svg>
          </IconButton>
        </MenuTools>
        <Spacer />
        <Workspace>
          <WorkspaceSelect aria-label="Workspace">
            <option>Painting</option>
          </WorkspaceSelect>
          <Chevron />
        </Workspace>
        <Search>
          <svg width="17" height="13" viewBox="0 0 17 13" fill="none" stroke="#d0d0d0">
            <circle cx="7" cy="4.500" r="3.700" strokeWidth="1.400" />
            <path d="m4.500 7.500-4 4.500" strokeWidth="1.800" />
            <path d="m11 8 5 0-2.500 2.500z" fill="#d0d0d0" stroke="none" />
          </svg>
          <SearchInput placeholder="Search Adobe Stock" aria-label="Search Adobe Stock" />
        </Search>
        <WindowButtons>
          <WindowButton aria-label="Minimize">
            <svg width="10" height="8"><path d="M0 5h10v3H0z" fill="#b5b5b5" /></svg>
          </WindowButton>
          <WindowButton aria-label="Restore">
            <svg width="12" height="11" viewBox="0 0 12 11" fill="none" stroke="#b5b5b5" strokeWidth="1.700">
              <path d="M1 4h6v6H1zM4.500 3.500V1H11v6H7.500" />
            </svg>
          </WindowButton>
          <WindowButton $width={46} aria-label="Close">
            <svg width="11" height="10" viewBox="0 0 11 10">
              <path d="m1 1 9 8M10 1 1 9" stroke="#b5b5b5" strokeWidth="2.200" />
            </svg>
          </WindowButton>
        </WindowButtons>
      </MenuBar>

      <ControlBar>
        <Grip $vertical />
        <Selection>No Selection</Selection>
        <Divider />
        <Field>
          <Well $color={GREEN} aria-label="Fill" />
          <FieldButton aria-label="Fill options"><Chevron /></FieldButton>
        </Field>
        <Field>
          <Well $color={GREEN} aria-label="Stroke color"><StrokeDot /></Well>
          <FieldButton aria-label="Stroke color options"><Chevron /></FieldButton>
        </Field>
        <DottedLabel $indent={5}>Stroke:</DottedLabel>
        <Field>
          <Spinner>
            <IconButton aria-label="Increase"><Chevron dir="up" /></IconButton>
            <IconButton aria-label="Decrease"><Chevron /></IconButton>
          </Spinner>
          <FieldInput $width={42} value={stroke} onChange={(e) => setStroke(e.target.value)} aria-label="Stroke weight" />
          <FieldButton aria-label="Stroke weights"><Chevron /></FieldButton>
        </Field>
        <Field>
          <Well $width={87}>
            <svg width="40" height="3"><path d="M0 0h40v3H0z" /></svg>
            Uniform
          </Well>
          <FieldButton aria-label="Width profiles"><Chevron /></FieldButton>
        </Field>
        <Field>
          <Well $width={87}>
            <svg width="16" height="10" viewBox="0 0 16 10" fill="none" stroke="#444">
              <path d="M.5 2.500h3v5h-3zM4.500 2.500c5-2 9-1 11 2.500-2 3.500-6 4.500-11 2.500zM7 4h5M7 6h5" />
            </svg>
            5.70
            <svg width="38" height="8" viewBox="0 0 38 8" fill="none">
              <path d="M8 4c8-4 12 0 16 1s8 0 12-2" stroke="#444" strokeWidth="1.800" />
            </svg>
          </Well>
          <FieldButton aria-label="Brush definitions"><Chevron /></FieldButton>
        </Field>
        <DottedLabel>Opacity:</DottedLabel>
        <Field>
          <FieldInput $width={48} value={opacity} onChange={(e) => setOpacity(e.target.value)} aria-label="Opacity" />
          <FieldButton aria-label="Opacity slider"><Chevron dir="right" /></FieldButton>
        </Field>
        <PlainLabel>Style:</PlainLabel>
        <Field>
          <Well aria-label="Graphic style" />
          <FieldButton aria-label="Graphic styles"><Chevron /></FieldButton>
        </Field>
        <Divider />
        <TextButton>Document Setup</TextButton>
        <TextButton>Preferences</TextButton>
        <IconButton aria-label="Select similar">
          <svg width="18" height="17" viewBox="0 0 18 17">
            <path d="M2.500 4.500h5v5h-5zM10.500 2.500h4v4h-4z" {...s} />
            <path d="M1 3h2M7 3h2M1 11h2M9 1h1M15 1h2M15 8h2" stroke={ICON} />
            <path d="M8 5v12l3-3.500h5z" fill={ICON} />
          </svg>
          <Chevron />
        </IconButton>
        <Tail>
          <svg width="13" height="13" viewBox="0 0 13 13">
            <path d="M1 1h4v4H1zM8 1h4v4H8zM1 8h4v4H1zM8 8h4v4H8z" fill={DIM} />
            <path d="M6.500 0v13M0 6.500h13" stroke={DIM} />
          </svg>
          <IconButton aria-label="Snap options">
            <svg width="15" height="14" viewBox="0 0 15 14">
              <path d="M0 0h4v4H0zM0 5h4v4H0zM0 10h4v4H0z" fill={ICON} />
              <path d="M6 4.500h5c4 0 4 5 0 5H9" fill="none" stroke={ICON} strokeWidth="2" />
            </svg>
            <Chevron color={DIM} />
          </IconButton>
          <IconButton aria-label="Control menu">
            <svg width="18" height="10" viewBox="0 0 18 10">
              <path d="M5 1h2M8.500 1H17M5 4.700h2M8.500 4.700H17M5 8.400h2M8.500 8.400H17" stroke="#ccc" strokeWidth="1.400" />
            </svg>
          </IconButton>
        </Tail>
      </ControlBar>

      <Main>
        <Tools />
        <Document>
          <TabBar>
            <DocTab>
              road.ai* @ 150% (CMYK/GPU Preview)
              <CloseTab aria-label="Close document">×</CloseTab>
            </DocTab>
          </TabBar>
          <Work>
            <Canvas>
              <Artwork />
            </Canvas>
            <ScrollY>
              <Chevron dir="up" color="#999" />
              <Thumb $width={14} $height={25} />
              <Chevron color="#999" />
            </ScrollY>
          </Work>
          <StatusBar>
            <StatusInput $width={49} value={zoom} onChange={(e) => setZoom(e.target.value)} aria-label="Zoom level" />
            <StatusButton $dark aria-label="Zoom levels"><Chevron /></StatusButton>
            <StatusButton $width={22} aria-label="First artboard">
              <svg width="9" height="8"><path d="M0 0h2v8H0zM8 0v8L3 4z" fill={DIM} /></svg>
            </StatusButton>
            <IconButton aria-label="Previous artboard">
              <svg width="20" height="8"><path d="M12 0v8L7 4z" fill={DIM} /></svg>
            </IconButton>
            <StatusInput $width={40} value={board} onChange={(e) => setBoard(e.target.value)} aria-label="Artboard" />
            <StatusButton $dark aria-label="Artboards"><Chevron /></StatusButton>
            <StatusButton $width={22} aria-label="Next artboard">
              <svg width="6" height="8"><path d="M0 0v8l5-4z" fill={DIM} /></svg>
            </StatusButton>
            <IconButton aria-label="Last artboard">
              <svg width="16" height="8"><path d="M4 0v8l5-4zM10 0h2v8h-2z" fill={DIM} /></svg>
            </IconButton>
            <StatusText>Paintbrush</StatusText>
            <StatusButton aria-label="Status options">
              <svg width="6" height="8"><path d="M0 0v8l5-4z" fill="#ddd" /></svg>
            </StatusButton>
            <ScrollX>
              <Chevron dir="left" color="#999" />
              <Thumb $width={26} $height={14} />
              <Chevron dir="right" color="#999" />
            </ScrollX>
          </StatusBar>
        </Document>

        <Dock>
          <Strip $end>
            <Doubles left />
          </Strip>
          {dockGroups.map((group) => (
            <DockGroup key={group[0]}>
              <Grip />
              {group.map((name) => (
                <DockButton key={name} aria-label={name}>
                  <svg width="20" height="20" viewBox="0 0 20 20">
                    {dockIcons[name]}
                  </svg>
                </DockButton>
              ))}
            </DockGroup>
          ))}
        </Dock>

        <Panels>
          <Strip $end>
            <Doubles />
          </Strip>
          <Panel>
            <Tabs items={["Color"]} closed />
            <ColorBody>
              <Quick>
                <Swatch fill="none" />
                <Chip $fill="#000" aria-label="Black" />
                <Chip $fill="#fff" aria-label="White" />
              </Quick>
              <Spectrum />
            </ColorBody>
          </Panel>

          <Panel>
            <Tabs items={["Swatches", "Libraries"]} />
            <SwatchTop>
              <FillStroke />
              <ViewToggle>
                <ViewButton aria-label="List view">
                  <svg width="12" height="14"><path d="M0 1h12M0 5h12M0 9h12M0 13h12" stroke="#ccc" strokeWidth="2" /></svg>
                </ViewButton>
                <ViewButton $active aria-label="Thumbnail view">
                  <svg width="14" height="14">
                    <path d="M0 0h4v4H0zM5 0h4v4H5zM10 0h4v4h-4zM0 5h4v4H0zM5 5h4v4H5zM10 5h4v4h-4zM0 10h4v4H0zM5 10h4v4H5zM10 10h4v4h-4z" fill="#ccc" />
                  </svg>
                </ViewButton>
              </ViewToggle>
            </SwatchTop>
            <SwatchBox>
              {swatchRows.map((row, i) => (
                <SwatchRow key={i} $gap={i === 3}>
                  {row.map((fill) => (
                    <Swatch key={fill} fill={fill} />
                  ))}
                </SwatchRow>
              ))}
              {groupRows.map((row, i) => (
                <SwatchRow key={i} $gap>
                  <FolderMark />
                  {row.map((fill) => (
                    <Swatch key={fill} fill={fill} />
                  ))}
                </SwatchRow>
              ))}
            </SwatchBox>
            <PanelTools>
              <PanelTool aria-label="Swatch libraries"><PanelIcon name="library" /></PanelTool>
              <PanelTool aria-label="Color themes"><PanelIcon name="share" /></PanelTool>
              <PanelTool aria-label="Add to library"><PanelIcon name="cloud" dim /></PanelTool>
              <PanelTool $push aria-label="Swatch kinds"><PanelIcon name="kinds" /></PanelTool>
              <PanelTool aria-label="Swatch options"><PanelIcon name="options" dim /></PanelTool>
              <PanelTool aria-label="New group"><PanelIcon name="folder" /></PanelTool>
              <PanelTool aria-label="New swatch"><PanelIcon name="page" /></PanelTool>
              <PanelTool aria-label="Delete swatch"><PanelIcon name="trash" dim /></PanelTool>
            </PanelTools>
          </Panel>

          <Panel>
            <Tabs items={["Color Guide"]} closed />
            <GuideBody>
              <BaseColor aria-label="Base color" />
              <Harmony>
                <Chip $size={14} $fill={GREEN} $picked aria-label="Green" />
                <Chip $size={16} $fill="#256840" aria-label="Dark green" />
                <Chip $size={16} $fill="#402563" aria-label="Violet" />
                <Chip $size={16} $fill="#c98383" aria-label="Pink" />
                <Chip $size={16} $fill="#675d3e" aria-label="Olive" />
                <HarmonyOpen aria-label="Harmony rules"><Chevron /></HarmonyOpen>
              </Harmony>
              <GuideTools>
                <IconButton aria-label="Edit colors">
                  <svg width="17" height="17" viewBox="0 0 17 17">
                    <circle cx="8.500" cy="8.500" r="8" fill="#bdbdbd" />
                    <path d="M8.500 .5v16M.5 8.500h16M3 3l11 11M14 3 3 14" stroke="#6a6a6a" />
                    <circle cx="8.500" cy="8.500" r="4.500" fill="none" stroke="#777" />
                    <circle cx="8.500" cy="8.500" r="1.500" fill="#555" />
                  </svg>
                </IconButton>
                <IconButton aria-label="Save color group">
                  <svg width="17" height="13" viewBox="0 0 17 13">
                    <path d="M4 7V1.500h12v8H7M8 2v7M12 2v7" fill="none" stroke="#bbb" />
                    <path d="M3 6v6M0 9h6" stroke="#ccc" strokeWidth="2" />
                  </svg>
                </IconButton>
              </GuideTools>
            </GuideBody>
          </Panel>

          <Panel>
            <Tabs items={["Brushes", "Stroke", "Symbols"]} />
            <Brushes />
          </Panel>

          <Panel $grow>
            <Tabs items={["Layers"]} />
            <LayerBox>
              <LayerRow>
                <svg width="13" height="9" viewBox="0 0 13 9">
                  <path d="M0 4.500C3-1 10-1 13 4.500 10 10 3 10 0 4.500z" fill="#c8d0d8" />
                  <circle cx="6.500" cy="4.500" r="2.500" fill="none" stroke="#4d637c" strokeWidth="1.300" />
                </svg>
                <LayerColor />
                <IconButton aria-label="Expand layer">
                  <svg width="14" height="10" viewBox="0 0 14 10">
                    <path d="m8 1 4 4-4 4" fill="none" stroke="#eee" strokeWidth="1.700" />
                  </svg>
                </IconButton>
                <LayerThumb>
                  <svg width="16" height="16" viewBox="228 0 1262 1262">
                    <g transform="translate(0 70)" fill="none" stroke="#a8907a" strokeWidth="55">
                      {roads.map((d) => (
                        <path key={d} d={d} />
                      ))}
                    </g>
                  </svg>
                </LayerThumb>
                <LayerName>Layer 1</LayerName>
                <Spacer />
                <svg width="30" height="10" viewBox="0 0 30 10">
                  <circle cx="5" cy="5" r="3.500" fill="#8f9dab" stroke="#b8c2cc" />
                </svg>
              </LayerRow>
            </LayerBox>
            <LayerTools>
              <LayerCount>1 Layer</LayerCount>
              <PanelTool aria-label="Collect for export"><PanelIcon name="exportBox" /></PanelTool>
              <PanelTool aria-label="Locate object"><PanelIcon name="find" dim /></PanelTool>
              <PanelTool aria-label="Clipping mask"><PanelIcon name="mask" /></PanelTool>
              <PanelTool aria-label="New sublayer"><PanelIcon name="sublayer" /></PanelTool>
              <PanelTool aria-label="New layer"><PanelIcon name="page" /></PanelTool>
              <PanelTool aria-label="Delete layer"><PanelIcon name="trash" dim /></PanelTool>
            </LayerTools>
          </Panel>
        </Panels>
      </Main>
    </Page>
  );
}
